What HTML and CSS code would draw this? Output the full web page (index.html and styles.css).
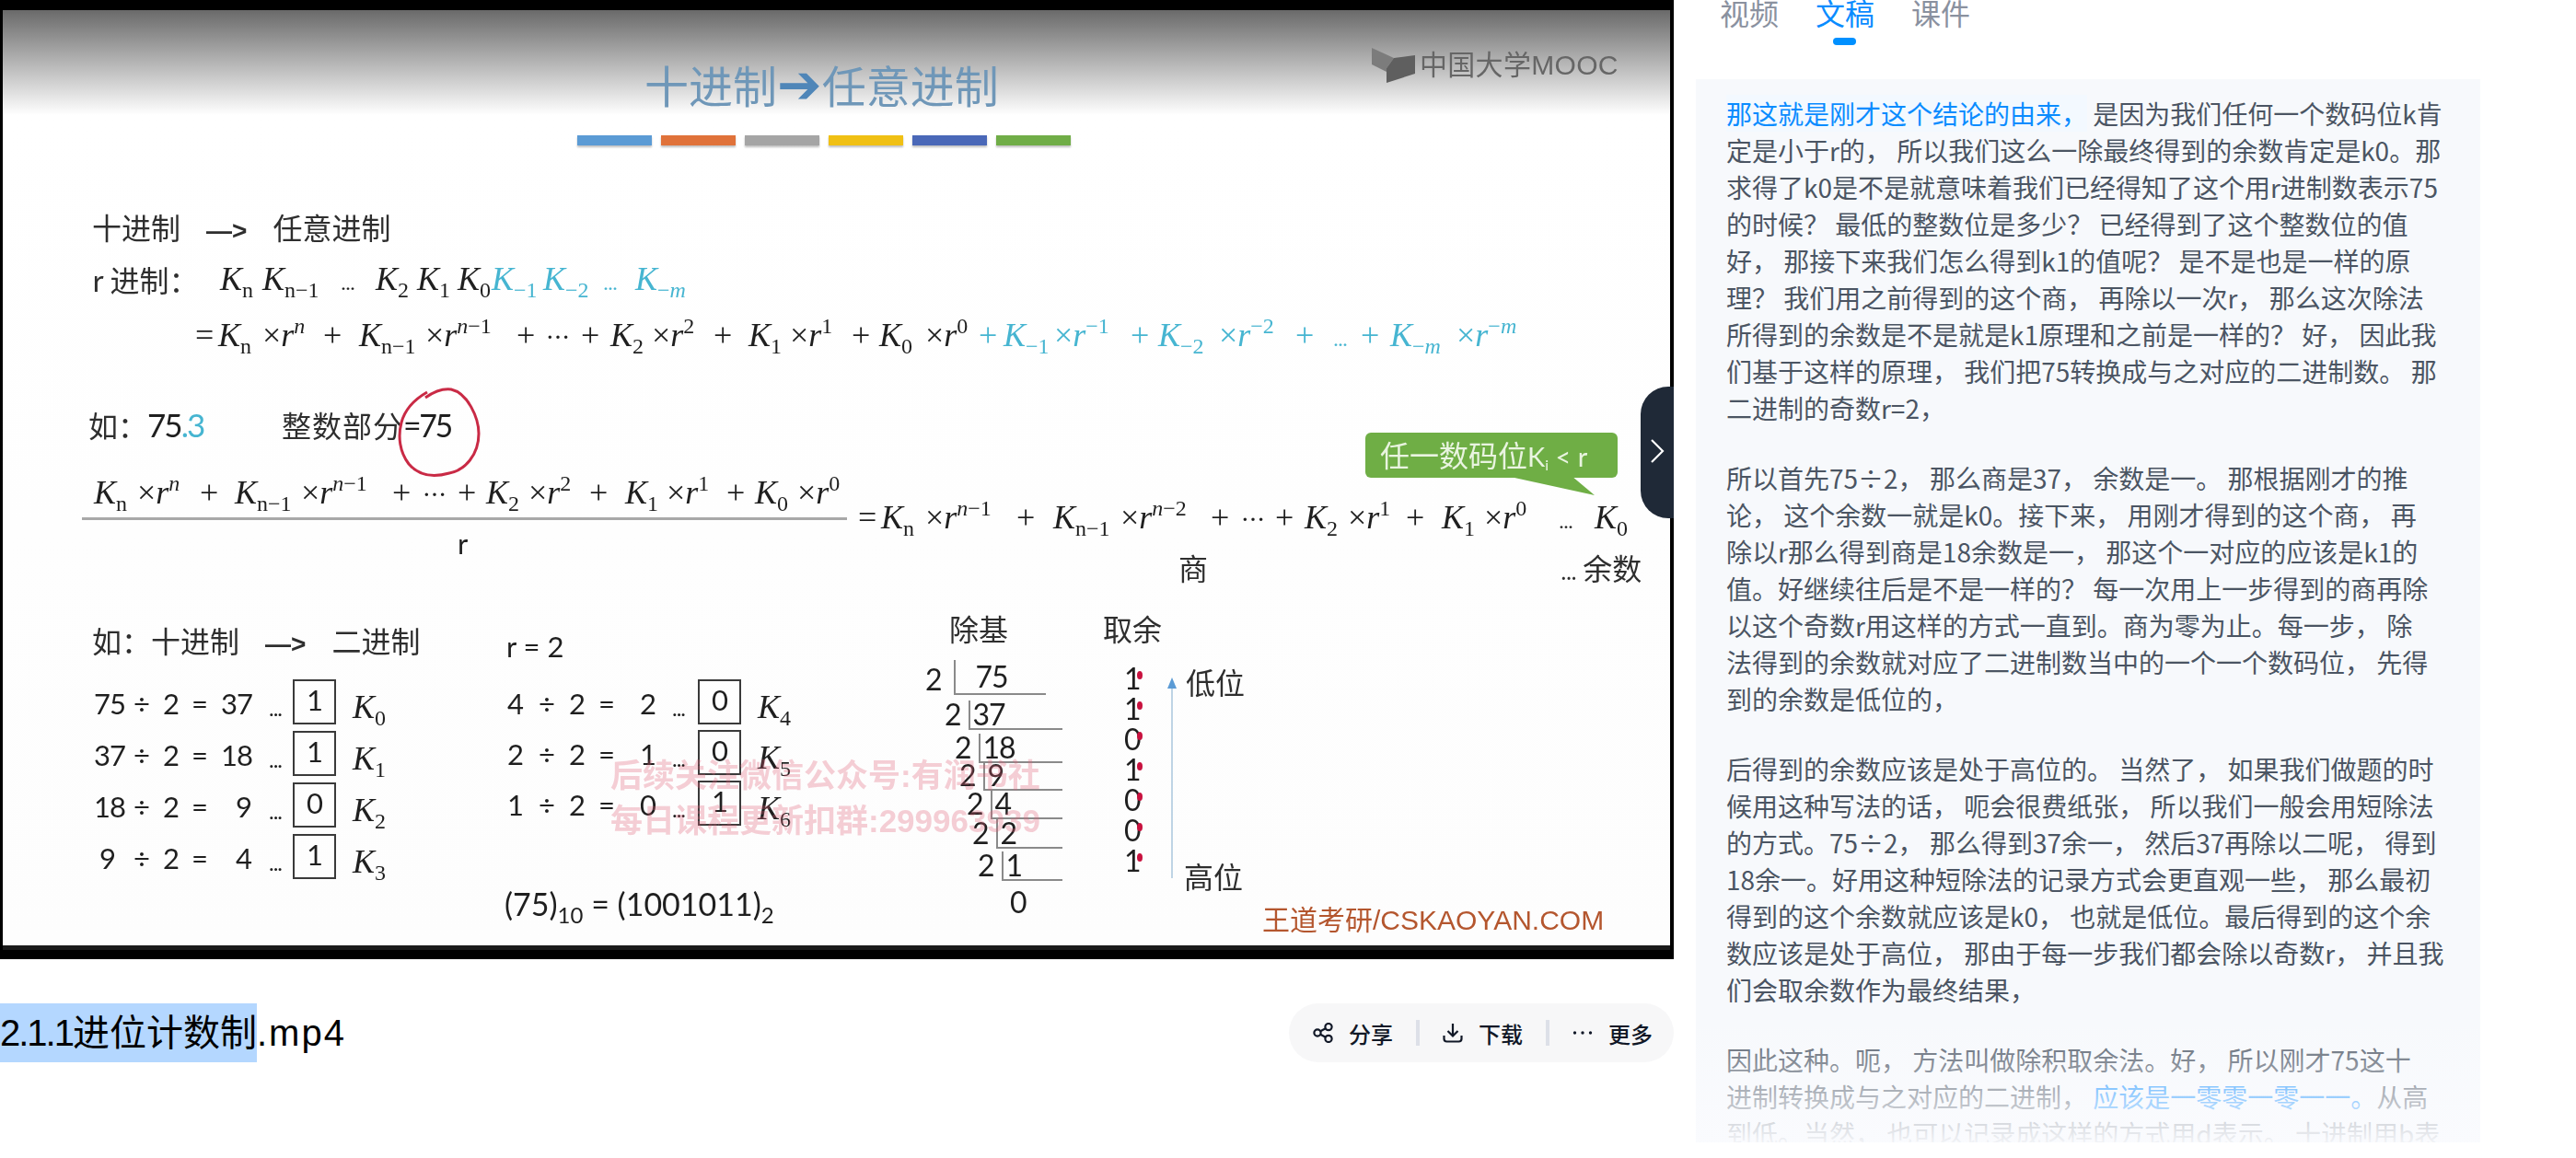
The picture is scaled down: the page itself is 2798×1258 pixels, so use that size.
FILE: index.html
```html
<!DOCTYPE html>
<html lang="zh-CN">
<head>
    <meta charset="UTF-8">
    <meta name="viewport" content="width=device-width, initial-scale=1.0">
    <title>2.1.1进位计数制.mp4</title>
    <link rel="stylesheet" href="styles.css">
</head>
<body>
    <div id="page">
        <main class="left">
            <div class="video">
                <div class="slide">
                    <div class="slide-head"></div>
                    <h2 class="slide-title">十进制<span class="arrow">➔</span>任意进制</h2>
                    <div class="color-bars"><span class="c1"></span><span class="c2"></span><span class="c3"></span><span class="c4"></span><span class="c5"></span><span class="c6"></span></div>
                    <div class="mooc-logo">
                        <svg width="50" height="38" viewBox="0 0 50 38"><polygon points="0,0 24,11 16,22 16,38 16,26 0,18" fill="#7c7c7c"/><polygon points="16,22 24,11 47,8 47,28 16,38" fill="#5f5f5f"/></svg>
                        <span>中国大学MOOC</span>
                    </div>

                    <div class="cn heading-1">十进制<span class="to">—&gt;</span>任意进制</div>
                    <div class="cn r-label">r 进制：</div>
                    <div class="math line-2">
                        <span><i>K</i><sub>n</sub></span><span><i>K</i><sub>n−1</sub></span><span class="dots">...</span><span><i>K</i><sub>2</sub></span><span><i>K</i><sub>1</sub></span><span><i>K</i><sub>0</sub></span>
                        <span class="blue"><i>K</i><sub>−1</sub></span><span class="blue"><i>K</i><sub>−2</sub></span><span class="blue dots">...</span><span class="blue"><i>K</i><sub>−<i>m</i></sub></span>
                    </div>
                    <div class="math line-3">
                        <span>=</span><span><i>K</i><sub>n</sub></span><span>×<i>r</i><sup><i>n</i></sup></span><span>+</span><span><i>K</i><sub>n−1</sub></span><span>×<i>r</i><sup><i>n</i>−1</sup></span><span>+</span><span class="ell">⋯</span><span>+</span><span><i>K</i><sub>2</sub></span><span>×<i>r</i><sup>2</sup></span><span>+</span><span><i>K</i><sub>1</sub></span><span>×<i>r</i><sup>1</sup></span><span>+</span><span><i>K</i><sub>0</sub></span><span>×<i>r</i><sup>0</sup></span>
                        <span class="blue">+</span><span class="blue"><i>K</i><sub>−1</sub></span><span class="blue">×<i>r</i><sup>−1</sup></span><span class="blue">+</span><span class="blue"><i>K</i><sub>−2</sub></span><span class="blue">×<i>r</i><sup>−2</sup></span><span class="blue">+</span><span class="blue dots">...</span><span class="blue">+</span><span class="blue"><i>K</i><sub>−<i>m</i></sub></span><span class="blue">×<i>r</i><sup>−<i>m</i></sup></span>
                    </div>

                    <div class="cn ru">如：<span class="num">75<span class="blue">.3</span></span></div>
                    <div class="cn int-part">整数部分<span class="num">=75</span></div>
                    <svg class="red-circle" width="100" height="104" viewBox="0 0 100 104"><path d="M32 13 C42 6 52 3 60 4 C78 8 90 35 90 52 C90 75 75 92 58 95 C40 100 25 98 14 85 C4 72 2 55 6 40 C10 25 20 15 34 7" fill="none" stroke="#c92a45" stroke-width="3"/></svg>

                    <div class="math numerator">
                        <span><i>K</i><sub>n</sub></span><span>×<i>r</i><sup><i>n</i></sup></span><span>+</span><span><i>K</i><sub>n−1</sub></span><span>×<i>r</i><sup><i>n</i>−1</sup></span><span>+</span><span class="ell">⋯</span><span>+</span><span><i>K</i><sub>2</sub></span><span>×<i>r</i><sup>2</sup></span><span>+</span><span><i>K</i><sub>1</sub></span><span>×<i>r</i><sup>1</sup></span><span>+</span><span><i>K</i><sub>0</sub></span><span>×<i>r</i><sup>0</sup></span>
                    </div>
                    <div class="frac-line"></div>
                    <div class="frac-r num">r</div>
                    <div class="math result">
                        <span>=</span><span><i>K</i><sub>n</sub></span><span>×<i>r</i><sup><i>n</i>−1</sup></span><span>+</span><span><i>K</i><sub>n−1</sub></span><span>×<i>r</i><sup><i>n</i>−2</sup></span><span>+</span><span class="ell">⋯</span><span>+</span><span><i>K</i><sub>2</sub></span><span>×<i>r</i><sup>1</sup></span><span>+</span><span><i>K</i><sub>1</sub></span><span>×<i>r</i><sup>0</sup></span><span class="dots">...</span><span><i>K</i><sub>0</sub></span>
                    </div>
                    <div class="cn shang">商</div>
                    <div class="cn yushu"><span class="dots">...</span> 余数</div>

                    <div class="bubble">任一数码位<span class="narrow">K<sub>i</sub> &lt; r</span></div>

                    <div class="cn heading-2">如：十进制<span class="to">—&gt;</span>二进制</div>
                    <div class="num r-eq">r = 2</div>

                    <div class="calc calc-a">
                        <div class="calc-row"><span>75</span><span>÷</span><span>2</span><span>=</span><span>37</span><span>...</span><b>1</b><span class="math-k"><i>K</i><sub>0</sub></span></div>
                        <div class="calc-row"><span>37</span><span>÷</span><span>2</span><span>=</span><span>18</span><span>...</span><b>1</b><span class="math-k"><i>K</i><sub>1</sub></span></div>
                        <div class="calc-row"><span>18</span><span>÷</span><span>2</span><span>=</span><span class="pad">9</span><span>...</span><b>0</b><span class="math-k"><i>K</i><sub>2</sub></span></div>
                        <div class="calc-row"><span class="pad-s">9</span><span>÷</span><span>2</span><span>=</span><span class="pad">4</span><span>...</span><b>1</b><span class="math-k"><i>K</i><sub>3</sub></span></div>
                    </div>
                    <div class="calc calc-b">
                        <div class="calc-row"><span>4</span><span>÷</span><span>2</span><span>=</span><span>2</span><span>...</span><b>0</b><span class="math-k"><i>K</i><sub>4</sub></span></div>
                        <div class="calc-row"><span>2</span><span>÷</span><span>2</span><span>=</span><span>1</span><span>...</span><b>0</b><span class="math-k"><i>K</i><sub>5</sub></span></div>
                        <div class="calc-row"><span>1</span><span>÷</span><span>2</span><span>=</span><span>0</span><span>...</span><b>1</b><span class="math-k"><i>K</i><sub>6</sub></span></div>
                    </div>
                    <div class="num summary">(75)<sub>10</sub> = (1001011)<sub>2</sub></div>

                    <div class="cn chu-ji">除基</div>
                    <div class="cn qu-yu">取余</div>
                    <div class="short-div">
                        <div class="sd-row s1"><span class="sd-base">2</span><span class="sd-val v1">75</span></div>
                        <div class="sd-row s2"><span class="sd-base">2</span><span class="sd-val">37</span></div>
                        <div class="sd-row s3"><span class="sd-base">2</span><span class="sd-val">18</span></div>
                        <div class="sd-row s4"><span class="sd-base">2</span><span class="sd-val">9</span></div>
                        <div class="sd-row s5"><span class="sd-base">2</span><span class="sd-val">4</span></div>
                        <div class="sd-row s6"><span class="sd-base">2</span><span class="sd-val">2</span></div>
                        <div class="sd-row s7"><span class="sd-base">2</span><span class="sd-val">1</span></div>
                        <div class="sd-zero">0</div>
                    </div>
                    <div class="remainders"><span>1</span><span>1</span><span>0</span><span>1</span><span>0</span><span>0</span><span>1</span></div>
                    <svg class="up-arrow" width="14" height="218" viewBox="0 0 14 218"><line x1="7" y1="8" x2="7" y2="218" stroke="#a9c6dc" stroke-width="1.5"/><polygon points="7,0 12,12 2,12" fill="#5b9bd5"/></svg>
                    <div class="cn low-pos">低位</div>
                    <div class="cn high-pos">高位</div>
                    <div class="brand">王道考研/CSKAOYAN.COM</div>
                    <div class="watermark">后续关注微信公众号:有润书社<br>每日课程更新扣群:299963939</div>
                </div>
                <button class="collapse" type="button">
                    <svg width="16" height="26" viewBox="0 0 16 26"><path d="M2 1 L14 13 L2 25" fill="none" stroke="#ffffff" stroke-width="2.2"/></svg>
                </button>
            </div>
            <div class="title-row">
                <h1 class="file-name"><span class="selected"><span class="ver">2.1.1</span>进位计数制</span><span class="ext">.mp4</span></h1>
                <div class="actions">
                    <a class="action">
                        <svg width="22" height="22" viewBox="0 0 22 22" fill="none" stroke="#111827" stroke-width="2.2"><circle cx="5" cy="11" r="3.6"/><circle cx="17" cy="4.6" r="3.6"/><circle cx="17" cy="17.4" r="3.6"/><path d="M8.2 9.3 L13.8 6.3 M8.2 12.7 L13.8 15.7"/></svg>
                        分享
                    </a>
                    <span class="sep"></span>
                    <a class="action">
                        <svg width="22" height="22" viewBox="0 0 22 22" fill="none" stroke="#111827" stroke-width="2.2"><path d="M11 1 V14 M5.5 9 L11 14.5 L16.5 9 M1.5 14 V17.5 Q1.5 20.5 4.5 20.5 H17.5 Q20.5 20.5 20.5 17.5 V14"/></svg>
                        下载
                    </a>
                    <span class="sep"></span>
                    <a class="action">
                        <svg width="22" height="22" viewBox="0 0 22 22" fill="#111827"><circle cx="2.5" cy="11" r="1.7"/><circle cx="11" cy="11" r="1.7"/><circle cx="19.5" cy="11" r="1.7"/></svg>
                        更多
                    </a>
                </div>
            </div>
        </main>

        <aside class="side">
            <nav class="tabs">
                <a>视频</a>
                <a class="active">文稿</a>
                <a>课件</a>
            </nav>
            <section class="transcript">
                <p><span class="current">那这就是刚才这个结论的由来，</span> 是因为我们任何一个数码位k肯<br>定是小于r的， 所以我们这么一除最终得到的余数肯定是k0。那<br>求得了k0是不是就意味着我们已经得知了这个用r进制数表示75<br>的时候？ 最低的整数位是多少？ 已经得到了这个整数位的值<br>好， 那接下来我们怎么得到k1的值呢？ 是不是也是一样的原<br>理？ 我们用之前得到的这个商， 再除以一次r， 那么这次除法<br>所得到的余数是不是就是k1原理和之前是一样的？ 好， 因此我<br>们基于这样的原理， 我们把75转换成与之对应的二进制数。 那<br>二进制的奇数r=2，</p>
                <p>所以首先75÷2， 那么商是37， 余数是一。 那根据刚才的推<br>论， 这个余数一就是k0。接下来， 用刚才得到的这个商， 再<br>除以r那么得到商是18余数是一， 那这个一对应的应该是k1的<br>值。好继续往后是不是一样的？ 每一次用上一步得到的商再除<br>以这个奇数r用这样的方式一直到。商为零为止。每一步， 除<br>法得到的余数就对应了二进制数当中的一个一个数码位， 先得<br>到的余数是低位的，</p>
                <p>后得到的余数应该是处于高位的。 当然了， 如果我们做题的时<br>候用这种写法的话， 呃会很费纸张， 所以我们一般会用短除法<br>的方式。75÷2， 那么得到37余一， 然后37再除以二呢， 得到<br>18余一。好用这种短除法的记录方式会更直观一些， 那么最初<br>得到的这个余数就应该是k0， 也就是低位。最后得到的这个余<br>数应该是处于高位， 那由于每一步我们都会除以奇数r， 并且我<br>们会取余数作为最终结果，</p>
                <p>因此这种。呃， 方法叫做除积取余法。好， 所以刚才75这十<br>进制转换成与之对应的二进制， <span class="next">应该是一零零一零一一。</span>从高<br>到低。当然， 也可以记录成这样的方式用d表示。 十进制用b表</p>
            </section>
        </aside>
    </div>
</body>
</html>
```

FILE: styles.css
```css
html, body {
    margin: 0;
    padding: 0;
    background-color: #ffffff;
}
body {
    width: 2798px;
    height: 1258px;
    overflow: hidden;
    font-family: "Liberation Sans", "Noto Sans CJK SC", sans-serif;
}
#page {
    display: flex;
    align-items: flex-start;
}
.left {
    width: 1818px;
    flex: none;
}

/* video frame, everything in .slide sits on a free canvas */
.video {
    position: relative;
    height: 1042px;
    background-color: #000000;
}
.slide {
    position: absolute;
    top: 0;
    left: 0;
    width: 1818px;
    height: 1042px;
    overflow: hidden;
    color: #2e2e2e;
    filter: blur(0.5px);
}
.slide > * {
    position: absolute;
}
.slide-head {
    top: 11px;
    left: 3px;
    width: 1811px;
    height: 1016px;
    background: linear-gradient(#6a6a6a 0, #ffffff 114px, #fdfdfd 100%);
    border-bottom: 5px solid #1a1a1a;
}
.slide-title {
    top: 56px;
    left: 700px;
    margin: 0;
    font-size: 48px;
    line-height: 70px;
    font-weight: 400;
    color: #6f97b8;
    font-family: "Noto Sans CJK SC", sans-serif;
    white-space: nowrap;
}
.arrow {
    font-family: "DejaVu Sans", sans-serif;
    font-size: 58px;
    line-height: 0;
    color: #4f86b8;
}
.color-bars {
    top: 147px;
    left: 627px;
    display: flex;
    gap: 10px;
}
.color-bars span {
    width: 81px;
    height: 11px;
    box-shadow: 0 2px 2px rgba(0, 0, 0, 0.25);
}
.c1 { background-color: #5b9bd5; }
.c2 { background-color: #e0723a; }
.c3 { background-color: #a5a5a5; }
.c4 { background-color: #f0c014; }
.c5 { background-color: #4a68b8; }
.c6 { background-color: #70ad47; }
.mooc-logo {
    top: 52px;
    left: 1490px;
    display: flex;
    align-items: flex-start;
    gap: 2px;
    color: #666666;
    font-size: 30px;
    line-height: 38px;
    letter-spacing: 0.3px;
    white-space: nowrap;
}

.cn {
    font-family: "Noto Sans CJK SC", sans-serif;
    font-size: 32px;
    line-height: 40px;
    white-space: nowrap;
}
.to {
    margin: 0 28px;
    font-family: "Liberation Sans", sans-serif;
    font-size: 28px;
    font-weight: 700;
}
.num, .calc, .short-div, .remainders, .narrow {
    font-family: Lato, "Liberation Sans", sans-serif;
    letter-spacing: -1px;
}
.num {
    font-size: 31px;
    line-height: 40px;
    color: #1f1f1f;
    white-space: nowrap;
}
.blue {
    color: #46b5d1;
}
.dots {
    font-size: 24px;
    letter-spacing: -1px;
}
.ell {
    font-size: 26px;
}
.heading-1 { top: 226px; left: 100px; }
.r-label { top: 283px; left: 100px; }
.ru { top: 441px; left: 96px; }
.ru .num { font-size: 35px; letter-spacing: -2px; }
.int-part { top: 441px; left: 306px; letter-spacing: 1px; }
.int-part .num { font-size: 34px; letter-spacing: -2.5px; }
.red-circle { top: 419px; left: 430px; }
.heading-2 { top: 675px; left: 100px; }
.r-eq { top: 682px; left: 550px; letter-spacing: 0; }
.shang { top: 596px; left: 1280px; }
.yushu { top: 596px; left: 1695px; }
.chu-ji { top: 662px; left: 1031px; }
.qu-yu { top: 662px; left: 1198px; }
.low-pos { top: 720px; left: 1288px; }
.high-pos { top: 931px; left: 1286px; }

/* formula lines, one column per term so the terms keep their spacing */
.math {
    display: grid;
    align-items: baseline;
    font-family: "Liberation Serif", serif;
    font-size: 36px;
    line-height: 40px;
    color: #1f1f1f;
    white-space: nowrap;
}
.math sub, .math-k sub {
    font-size: 24px;
    line-height: 0;
    vertical-align: -8px;
}
.math sup {
    font-size: 24px;
    line-height: 0;
    vertical-align: 14px;
}
.math .blue { color: #46b5d1; }
.line-2 {
    top: 283px;
    left: 239px;
    grid-template-columns: 46px 85px 38px 45px 44px 37px 56px 65px 35px auto;
}
.line-3 {
    top: 344px;
    left: 212px;
    grid-template-columns: 25px 48px 66px 39px 72px 99px 32px 38px 32px 45px 67px 38px 45px 67px 30px 50px 58px 27px 55px 83px 30px 66px 83px 41px 30px 32px 72px auto;
}
.numerator {
    top: 515px;
    left: 102px;
    grid-template-columns: 47px 68px 38px 72px 99px 33px 38px 31px 46px 66px 39px 45px 65px 31px 46px auto;
}
.result {
    top: 542px;
    left: 932px;
    grid-template-columns: 25px 48px 99px 40px 73px 98px 33px 37px 32px 47px 63px 39px 46px 81px 39px auto;
}
.frac-line {
    top: 562px;
    left: 89px;
    width: 831px;
    height: 3px;
    background-color: #a8a8a8;
}
.frac-r { top: 570px; left: 497px; }

.bubble {
    top: 470px;
    left: 1483px;
    width: 274px;
    height: 49px;
    box-sizing: border-box;
    padding-left: 16px;
    background-color: #6fae45;
    border-radius: 6px;
    color: #e9f4e0;
    font-family: "Noto Sans CJK SC", sans-serif;
    font-size: 32px;
    line-height: 46px;
    white-space: nowrap;
}
.narrow {
    font-size: 29px;
    letter-spacing: 0;
}
.bubble sub {
    font-size: 16px;
    line-height: 0;
    vertical-align: -4px;
}
.bubble::after {
    content: "";
    position: absolute;
    top: 49px;
    left: 162px;
    width: 87px;
    height: 19px;
    background-color: #6fae45;
    clip-path: polygon(0 0, 100% 100%, 74% 0);
}

.calc {
    display: flex;
    flex-direction: column;
    font-size: 31px;
    color: #1f1f1f;
}
.calc-a { top: 735px; left: 102px; gap: 7px; }
.calc-b { top: 735px; left: 551px; gap: 6px; }
.calc-row {
    display: grid;
    align-items: center;
    box-sizing: border-box;
    height: 49px;
    padding-top: 4px;
    white-space: nowrap;
}
.calc-a .calc-row { grid-template-columns: 43px 32px 31px 32px 52px 26px 47px auto; }
.calc-b .calc-row { grid-template-columns: 34px 33px 32px 45px 35px 28px 47px auto; }
.calc-row b {
    box-sizing: border-box;
    height: 49px;
    margin-top: -4px;
    border: 2px solid #3a3a3a;
    font-weight: 400;
    line-height: 40px;
    text-align: center;
}
.calc-row span:nth-child(6) {
    font-size: 24px;
    letter-spacing: -1px;
    padding-top: 8px;
}
.math-k {
    padding: 8px 0 0 18px;
    font-family: "Liberation Serif", serif;
    font-size: 36px;
    letter-spacing: 0;
}
.pad { padding-left: 16px; }
.pad-s { padding-left: 6px; }
.summary { top: 962px; left: 548px; font-size: 34px; letter-spacing: 0; }
.summary sub { font-size: 24px; line-height: 0; }

/* short division stairs */
.short-div {
    top: 717px;
    left: 1005px;
    width: 149px;
    font-size: 32px;
    line-height: 30px;
    color: #1f1f1f;
}
.sd-row {
    display: flex;
    align-items: flex-end;
}
.sd-base {
    padding-right: 8px;
    padding-bottom: 2px;
}
.sd-val {
    flex: 1;
    border-left: 2px solid #8a8a8a;
    border-bottom: 2px solid #8a8a8a;
    padding-left: 3px;
}
.s1 { height: 38px; margin-left: 0; margin-right: 18px; }
.s1 .sd-base { padding-right: 13px; }
.s1 .sd-val { height: 38px; padding-left: 22px; box-sizing: border-box; line-height: 36px; }
.s2 { height: 38px; margin-left: 21px; }
.s3 { height: 36px; margin-left: 32px; }
.s4 { height: 30px; margin-left: 37px; }
.s5 { height: 31px; margin-left: 45px; }
.s6 { height: 32px; margin-left: 51px; }
.s7 { height: 35px; margin-left: 57px; }
.sd-zero { margin: 8px 0 0 92px; }
.remainders {
    top: 722px;
    left: 1221px;
    display: flex;
    flex-direction: column;
    gap: 3px;
    font-size: 32px;
    line-height: 30px;
    color: #1f1f1f;
}
.remainders span {
    position: relative;
    height: 30px;
}
.remainders span::after {
    content: "";
    position: absolute;
    top: 7px;
    left: 14px;
    width: 6px;
    height: 9px;
    border-radius: 50%;
    background-color: #c8123f;
}
.up-arrow { top: 736px; left: 1266px; }
.brand {
    top: 984px;
    left: 1371px;
    color: #b4562e;
    font-size: 30px;
    line-height: 32px;
    white-space: nowrap;
}
.watermark {
    top: 818px;
    left: 663px;
    color: rgba(226, 96, 118, 0.3);
    font-size: 35px;
    font-weight: 700;
    line-height: 49px;
    white-space: nowrap;
}
.collapse {
    position: absolute;
    top: 420px;
    left: 1782px;
    width: 36px;
    height: 143px;
    padding: 0;
    border: none;
    border-radius: 30px 0 0 30px;
    background-color: #1f2937;
}

/* below the video */
.title-row {
    display: flex;
    justify-content: space-between;
    align-items: center;
    margin-top: 48px;
}
.file-name {
    margin: 0;
    font-size: 40px;
    font-weight: 400;
    line-height: 64px;
    color: #000000;
}
.selected {
    display: inline-block;
    background-color: #b4d7ff;
}
.ver {
    letter-spacing: -2px;
}
.ext {
    letter-spacing: 2px;
}
.actions {
    display: flex;
    align-items: center;
    height: 64px;
    padding: 0 23px 0 26px;
    background-color: #f7f7f8;
    border-radius: 32px;
}
.action {
    display: flex;
    align-items: center;
    gap: 17px;
    color: #111827;
    font-family: "Noto Sans CJK SC", sans-serif;
    font-size: 24px;
    font-weight: 500;
}
.sep {
    width: 4px;
    height: 28px;
    margin: 0 25px;
    background-color: #dde0e8;
}

/* right column */
.side {
    width: 852px;
    margin-left: 24px;
    flex: none;
}
.tabs {
    display: flex;
    gap: 40px;
    height: 93px;
    margin-top: -7px;
    padding-left: 26px;
    color: #8a919f;
    font-family: "Noto Sans CJK SC", sans-serif;
    font-size: 32px;
    line-height: 40px;
}
.tabs a {
    position: relative;
}
.tabs .active {
    color: #0a8cff;
}
.tabs .active::after {
    content: "";
    position: absolute;
    top: 48px;
    left: 19px;
    width: 25px;
    height: 8px;
    border-radius: 4px;
    background-color: #0090ff;
}
.transcript {
    position: relative;
    box-sizing: border-box;
    height: 1155px;
    padding: 17px 0 0 33px;
    overflow: hidden;
    background-color: #f7f9fc;
    color: #4b5563;
    font-family: "Noto Sans CJK SC", sans-serif;
    font-size: 28px;
    line-height: 40px;
    white-space: nowrap;
}
.transcript::after {
    content: "";
    position: absolute;
    left: 0;
    right: 0;
    bottom: 0;
    height: 135px;
    background: linear-gradient(rgba(250, 251, 254, 0), rgba(250, 251, 254, 0.95));
}
.transcript p {
    margin: 0 0 36px;
}
.current {
    color: #0a8cff;
    background-color: #f3f9ff;
}
.next {
    color: #0a8cff;
}
```
